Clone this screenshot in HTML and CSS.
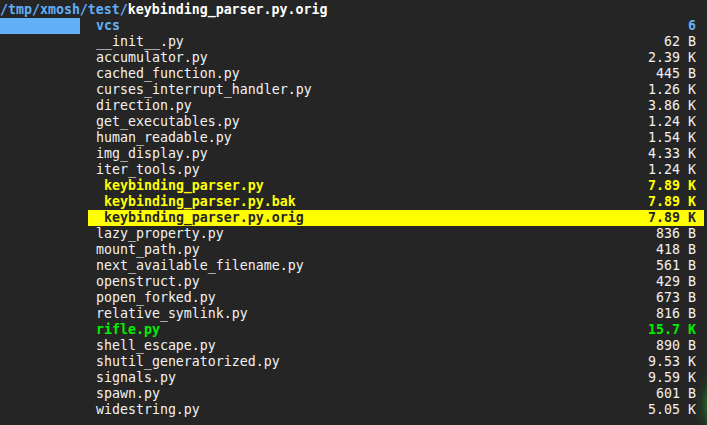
FILE: index.html
```html
<!DOCTYPE html>
<html>
<head>
<meta charset="utf-8">
<link rel="stylesheet" href="styles.css">
</head>
<body>
<div class="screen">
  <div class="title"><span class="path">/tmp/xmosh/test/</span><span class="fname">keybinding_parser.py.orig</span></div>
  <div class="panes">
    <div class="parent">
      <div class="prow current"></div>
    </div>
    <div class="files">
      <div class="row dir"><span>vcs</span><span>6</span></div>
      <div class="row"><span>__init__.py</span><span>62 B</span></div>
      <div class="row"><span>accumulator.py</span><span>2.39 K</span></div>
      <div class="row"><span>cached_function.py</span><span>445 B</span></div>
      <div class="row"><span>curses_interrupt_handler.py</span><span>1.26 K</span></div>
      <div class="row"><span>direction.py</span><span>3.86 K</span></div>
      <div class="row"><span>get_executables.py</span><span>1.24 K</span></div>
      <div class="row"><span>human_readable.py</span><span>1.54 K</span></div>
      <div class="row"><span>img_display.py</span><span>4.33 K</span></div>
      <div class="row"><span>iter_tools.py</span><span>1.24 K</span></div>
      <div class="row marked"><span>keybinding_parser.py</span><span>7.89 K</span></div>
      <div class="row marked"><span>keybinding_parser.py.bak</span><span>7.89 K</span></div>
      <div class="row marked selected"><span>keybinding_parser.py.orig</span><span>7.89 K</span></div>
      <div class="row"><span>lazy_property.py</span><span>836 B</span></div>
      <div class="row"><span>mount_path.py</span><span>418 B</span></div>
      <div class="row"><span>next_available_filename.py</span><span>561 B</span></div>
      <div class="row"><span>openstruct.py</span><span>429 B</span></div>
      <div class="row"><span>popen_forked.py</span><span>673 B</span></div>
      <div class="row"><span>relative_symlink.py</span><span>816 B</span></div>
      <div class="row exec"><span>rifle.py</span><span>15.7 K</span></div>
      <div class="row"><span>shell_escape.py</span><span>890 B</span></div>
      <div class="row"><span>shutil_generatorized.py</span><span>9.53 K</span></div>
      <div class="row"><span>signals.py</span><span>9.59 K</span></div>
      <div class="row"><span>spawn.py</span><span>601 B</span></div>
      <div class="row"><span>widestring.py</span><span>5.05 K</span></div>
    </div>
  </div>
</div>
</body>
</html>
```

FILE: styles.css
```css
html, body {
  margin: 0;
  padding: 0;
}
body {
  width: 707px;
  height: 425px;
  overflow: hidden;
  background-color: #252525;
  background-image: radial-gradient(ellipse 18px 40px at 712px 405px, rgba(40, 160, 60, 0.75), rgba(30, 90, 40, 0.3) 60%, rgba(37, 37, 37, 0) 100%);
  color: #f2f2f2;
  font-family: "DejaVu Sans Mono", "Liberation Mono", monospace;
  font-size: 13.28px;
  line-height: 16px;
}
.screen {
  padding-top: 2px;
}
.title {
  height: 16px;
  white-space: pre;
  font-weight: bold;
}
.title .path {
  color: #61aff5;
}
.title .fname {
  color: #ffffff;
}
.panes {
  display: flex;
  gap: 8px;
}
.parent {
  width: 80px;
}
.prow {
  height: 16px;
}
.prow.current {
  background: #61aff5;
}
.files {
  width: 616px;
}
.row {
  display: flex;
  justify-content: space-between;
  height: 16px;
  padding: 0 8px;
  white-space: pre;
}
.row.dir {
  color: #61aff5;
  font-weight: bold;
}
.row.marked {
  color: #ffff00;
  font-weight: bold;
  padding-left: 16px;
}
.row.selected {
  background: #ffff00;
  color: #262626;
}
.row.exec {
  color: #00ee00;
  font-weight: bold;
}
```
